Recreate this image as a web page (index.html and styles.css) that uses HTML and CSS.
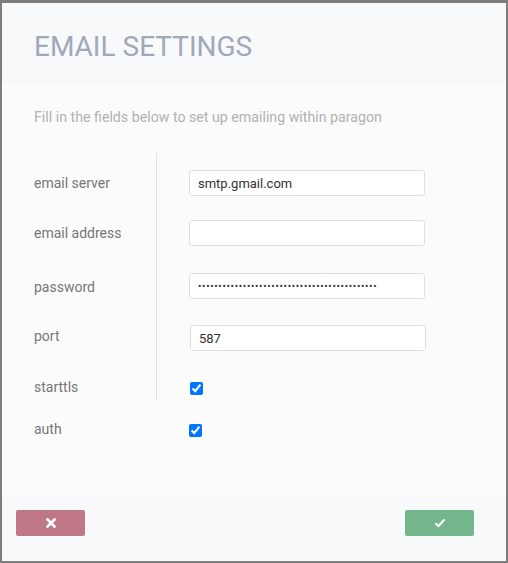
FILE: index.html
```html
<!DOCTYPE html>
<html>
<head>
<meta charset="utf-8">
<link rel="stylesheet" href="styles.css">
</head>
<body>
<div class="modal">
  <div class="header">
    <h1 class="title">EMAIL SETTINGS</h1>
  </div>
  <div class="content">
    <p class="intro">Fill in the fields below to set up emailing within paragon</p>
    <div class="group">
      <div class="label first">email server</div>
      <div class="field first"><input class="input" type="text" value="smtp.gmail.com"></div>
      <div class="label">email address</div>
      <div class="field"><input class="input" type="text" value=""></div>
      <div class="label down">password</div>
      <div class="field"><input class="input pw" type="password" value="abcdefghijabcdefghijabcdefghijabcdefghijabcd"></div>
      <div class="label up">port</div>
      <div class="field"><input class="input shift" type="text" value="587"></div>
      <div class="label last">starttls</div>
      <div class="field last"><input class="check shift" type="checkbox" checked></div>
    </div>
    <div class="auth-row">
      <div class="label plain">auth</div>
      <div class="field"><input class="check" type="checkbox" checked></div>
    </div>
  </div>
  <div class="footer">
    <button class="btn cancel" type="button" aria-label="cancel">
      <svg width="10" height="10" viewBox="0 0 10 10"><path d="M1.5 1.5 L8.5 8.5 M8.5 1.5 L1.5 8.5" stroke="#fff" stroke-width="2.6" stroke-linecap="square" fill="none"/></svg>
    </button>
    <button class="btn ok" type="button" aria-label="ok">
      <svg width="12" height="10" viewBox="0 0 12 10"><path d="M1.5 5.2 L4.5 8 L10.5 1.5" stroke="#fff" stroke-width="2.2" fill="none" stroke-linejoin="miter"/></svg>
    </button>
  </div>
</div>
</body>
</html>
```

FILE: styles.css
```css
html, body {
  margin: 0;
  padding: 0;
}
body {
  background: #7d7d7d;
  width: 508px;
  height: 563px;
  overflow: hidden;
  font-family: Roboto, "Liberation Sans", sans-serif;
}
.modal {
  margin: 3px 2px 0 2px;
  height: 558px;
  display: flex;
  flex-direction: column;
  background: #fbfbfc;
}
.header {
  background: #f8f9fb;
  height: 81px;
  padding-left: 32px;
  box-sizing: border-box;
}
.title {
  margin: 0;
  padding-top: 28px;
  font-size: 28px;
  line-height: 32px;
  font-weight: 400;
  color: #a1a9b9;
}
.content {
  flex: 1;
  padding: 0 32px;
}
.intro {
  margin: 23px 0 0 0;
  font-size: 14.2px;
  line-height: 20px;
  color: #b2b2b2;
}
.group {
  margin-top: 26px;
  display: grid;
  grid-template-columns: 123px 1fr;
  grid-template-rows: 67px 53px 52px 52px 23px;
}
.label {
  font-size: 14px;
  line-height: 26px;
  color: #777;
  border-right: 1px solid #dfe3ea;
}
.label.down {
  padding-top: 1px;
  line-height: 26px;
}
.label.up {
  line-height: 22px;
}
.label.plain {
  border-right: 0;
  width: 123px;
  flex: none;
}
.first {
  padding-top: 17px;
}
.field {
  padding-left: 32px;
}
.input {
  display: block;
  box-sizing: border-box;
  width: 236px;
  height: 26px;
  margin: 0;
  padding: 0 8px;
  border: 1px solid #dcdfe5;
  border-radius: 3px;
  background: #fff;
  font-family: Roboto, "Liberation Sans", sans-serif;
  font-size: 13px;
  color: #333;
  outline: none;
}
.input.pw {
  font-size: 10px;
  letter-spacing: 0.7px;
}
.shift {
  margin-left: 1px;
}
.check {
  display: block;
  width: 13px;
  height: 13px;
  margin: 0;
}
.field.last .check {
  margin-top: 5px;
}
.field.last .check.shift {
  margin-left: 1px;
}
.label.last {
  line-height: 20px;
}
.auth-row {
  display: flex;
  margin-top: 16px;
  align-items: center;
}
.auth-row .field {
  padding-left: 32px;
  padding-top: 3px;
}
.footer {
  background: #f8f9fb;
  height: 67px;
  box-sizing: border-box;
  padding: 16px 32px 0 14px;
  display: flex;
  justify-content: space-between;
  align-items: flex-start;
}
.btn {
  width: 69px;
  height: 26px;
  border: 0;
  border-radius: 2px;
  padding: 0;
  display: flex;
  align-items: center;
  justify-content: center;
  cursor: pointer;
}
.btn.cancel {
  background: #c07787;
}
.btn.ok {
  background: #74b68b;
}
```
